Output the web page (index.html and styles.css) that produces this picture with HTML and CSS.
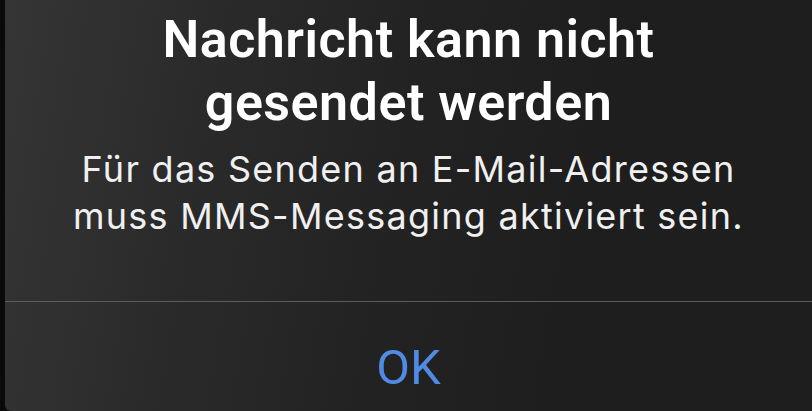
FILE: index.html
```html
<!DOCTYPE html>
<html lang="de">
<head>
    <meta charset="UTF-8">
    <meta name="viewport" content="width=device-width, initial-scale=1.0">
    <title>Nachricht kann nicht gesendet werden</title>
    <link rel="stylesheet" href="styles.css">
</head>
<body>

    <div class="alert">
        <div class="alert-content">
            <h2 class="alert-title">Nachricht kann nicht<br>gesendet werden</h2>
            <p class="alert-message">Für das Senden an E-Mail-Adressen<br>muss MMS-Messaging aktiviert sein.</p>
        </div>
        <div class="alert-actions">
            <button type="button" class="alert-btn">OK</button>
        </div>
    </div>

</body>
</html>
```

FILE: styles.css
```css
html, body {
    height: 100%;
}
body {
    font-family: Roboto, "Noto Sans", sans-serif;
    background-color: #0a0a0a;
    margin: 0;
    padding: 0;
    overflow: hidden;
}
.alert {
    height: 100%;
    margin-left: 5px;
    display: flex;
    flex-direction: column;
    background: linear-gradient(100deg, #353535 0%, #2a2a2a 25%, #222 50%, #1e1e1e 70%, #1e1e1e 100%);
    border-bottom-left-radius: 6px;
}
.alert-content {
    height: 302px;
    box-sizing: border-box;
    padding-top: 8px;
    text-align: center;
    border-bottom: 1px solid #5c5c5c;
}
.alert-title {
    margin: 0;
    color: #fff;
    font-size: 52px;
    line-height: 63px;
    font-weight: 600;
    letter-spacing: 0.5px;
}
.alert-message {
    margin: 12px 0 0;
    color: #f0f0f0;
    font-family: Inter, Roboto, sans-serif;
    font-size: 36px;
    line-height: 47px;
    font-weight: 400;
    letter-spacing: 1.25px;
}
.alert-actions {
    flex: 1;
    display: flex;
    justify-content: center;
    padding-top: 36px;
}
.alert-btn {
    background: none;
    border: none;
    padding: 0;
    font-family: inherit;
    font-size: 49px;
    line-height: 60px;
    height: 60px;
    color: #4f8ae3;
    cursor: pointer;
}
```
